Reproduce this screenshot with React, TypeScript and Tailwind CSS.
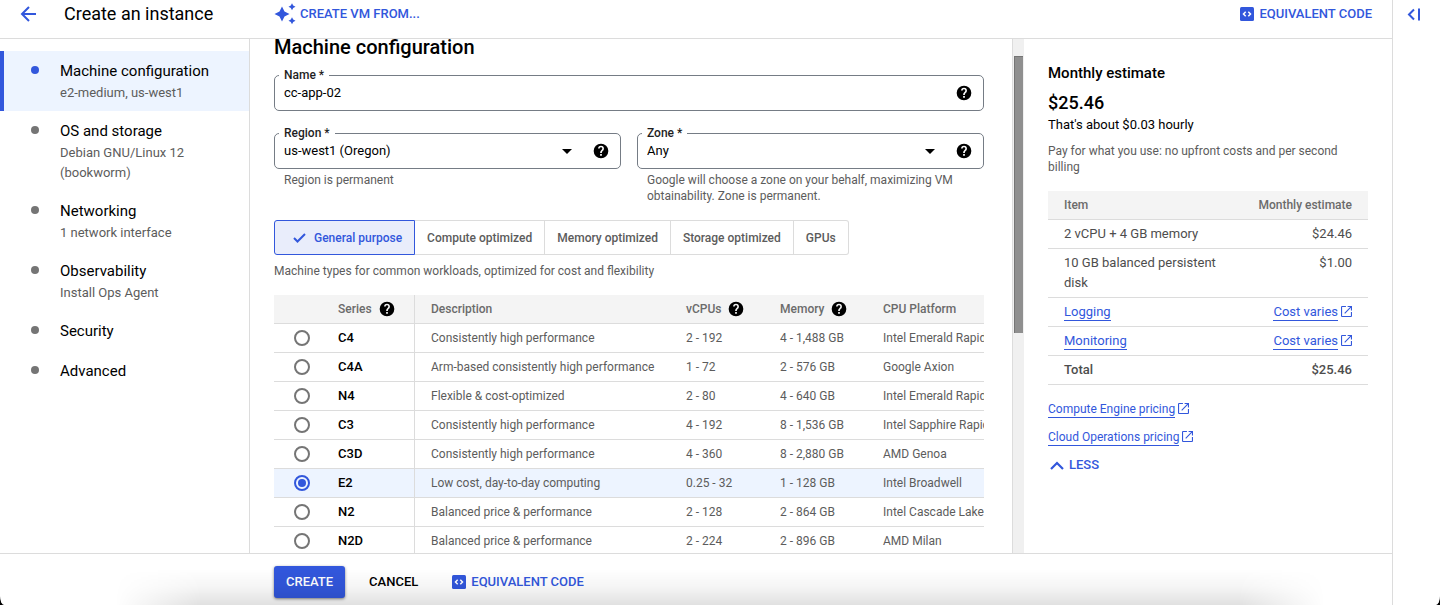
import { useState } from "react";

const BLUE = "#3257dc";

function HelpIcon() {
  return (
    <svg viewBox="0 0 24 24" className="size-4 shrink-0 text-black" fill="currentColor" aria-hidden="true">
      <path d="M12 1a11 11 0 1 0 0 22 11 11 0 0 0 0-22zm1.3 18h-2.6v-2.6h2.6zm2.5-8.2-1 1c-.9.9-1.5 1.700-1.5 3.300h-2.600v-.6c0-1.300.5-2.400 1.400-3.200l1.300-1.400c.4-.4.6-.9.6-1.500a2 2 0 1 0-4 0H7.600a4.400 4.400 0 0 1 8.800 0c0 .9-.2 1.700-.6 2.400z" />
    </svg>
  );
}

function HelpButton({ label }: { label: string }) {
  return (
    <button type="button" aria-label={label} className="flex">
      <HelpIcon />
    </button>
  );
}

function CodeIcon() {
  return (
    <svg viewBox="0 0 14 14" className="size-3.5 shrink-0" aria-hidden="true">
      <rect width="14" height="14" rx="1.500" fill={BLUE} />
      <path d="M5.700 4.800 3.500 7l2.200 2.200M8.300 4.800 10.500 7 8.300 9.200" fill="none" stroke="#fff" strokeWidth="1.500" />
    </svg>
  );
}

function SparkIcon() {
  return (
    <svg viewBox="0 0 22 22" className="size-[22px] shrink-0" fill={BLUE} aria-hidden="true">
      <path d="M8 3.500 10.500 8.500 15.500 11 10.500 13.500 8 18.500 5.500 13.500 .5 11 5.500 8.500z" />
      <path d="M18 .3 19.200 2.600 21.500 3.800 19.200 5 18 7.300 16.800 5 14.500 3.800 16.800 2.600z" />
      <path d="M18 14.300 19.200 16.600 21.500 17.800 19.200 19 18 21.300 16.800 19 14.500 17.800 16.800 16.600z" />
    </svg>
  );
}

function ExternalIcon() {
  return (
    <svg viewBox="2 2 20 20" className="mt-0.5 size-[11px] shrink-0" fill="currentColor" aria-hidden="true">
      <path d="M20 20H4V4h7V2H4a2 2 0 0 0-2 2v16a2 2 0 0 0 2 2h16a2 2 0 0 0 2-2v-7h-2zM14 2v2h4.600L8 14.600 9.400 16 20 5.400V10h2V2z" />
    </svg>
  );
}

function ExternalLink({ children }: { children: string }) {
  return (
    <a href="#" className="inline-flex items-start gap-[3px] text-[#3257dc]">
      <span className="border-b border-current leading-4">{children}</span>
      <ExternalIcon />
    </a>
  );
}

const steps = [
  { title: "Machine configuration", detail: "e2-medium, us-west1" },
  { title: "OS and storage", detail: "Debian GNU/Linux 12 (bookworm)" },
  { title: "Networking", detail: "1 network interface" },
  { title: "Observability", detail: "Install Ops Agent" },
  { title: "Security" },
  { title: "Advanced" },
];

function Sidebar() {
  return (
    <nav aria-label="Steps" className="w-[250px] shrink-0 border-r border-[#dcdcdc] pt-3">
      <ul>
        {steps.map((step, i) => (
          <li key={step.title}>
            <a
              href="#"
              aria-current={i === 0 ? "step" : undefined}
              className={`flex border-l-4 py-2 pr-10 pl-[27px] ${i === 0 ? "border-[#3257dc] bg-[#edf4ff]" : "border-transparent"}`}
            >
              <span className={`mt-[7px] mr-[21px] size-2 shrink-0 rounded-full ${i === 0 ? "bg-[#3257dc]" : "bg-[#757575]"}`} />
              <span className="flex flex-col">
                <span className="text-[15px] leading-6 whitespace-nowrap text-black">{step.title}</span>
                {step.detail && <span className="text-[13px] leading-5 text-[#5c5c5c]">{step.detail}</span>}
              </span>
            </a>
          </li>
        ))}
      </ul>
    </nav>
  );
}

const fieldBox = "relative flex h-9 min-w-0 items-center rounded-[5px] border border-[#757c85] pr-[11px] pl-[9px]";
const fieldLabel = "absolute -top-[9px] left-1 bg-white px-[5px] text-[12px] leading-4 font-medium text-[#1f1f1f]";

function SelectField({ id, label, value, hint }: { id: string; label: string; value: string; hint: string }) {
  return (
    <div className="min-w-0">
      <div className={fieldBox}>
        <label htmlFor={id} className={fieldLabel}>
          {label} *
        </label>
        <select id={id} className="min-w-0 flex-1 appearance-none bg-transparent text-[13px] leading-5 text-black outline-none">
          <option>{value}</option>
        </select>
        <svg viewBox="0 0 10 5" className="mr-[21px] h-[5px] w-2.5 shrink-0" aria-hidden="true">
          <path d="M0 0h10L5 5z" />
        </svg>
        <HelpButton label={`About ${label}`} />
      </div>
      <p className="mt-[3px] pr-4 pl-2.5 text-[12px] leading-4 text-[#5c5c5c]">{hint}</p>
    </div>
  );
}

const families = ["General purpose", "Compute optimized", "Memory optimized", "Storage optimized", "GPUs"];

const series = [
  ["C4", "Consistently high performance", "2 - 192", "4 - 1,488 GB", "Intel Emerald Rapids"],
  ["C4A", "Arm-based consistently high performance", "1 - 72", "2 - 576 GB", "Google Axion"],
  ["N4", "Flexible & cost-optimized", "2 - 80", "4 - 640 GB", "Intel Emerald Rapids"],
  ["C3", "Consistently high performance", "4 - 192", "8 - 1,536 GB", "Intel Sapphire Rapids"],
  ["C3D", "Consistently high performance", "4 - 360", "8 - 2,880 GB", "AMD Genoa"],
  ["E2", "Low cost, day-to-day computing", "0.25 - 32", "1 - 128 GB", "Intel Broadwell"],
  ["N2", "Balanced price & performance", "2 - 128", "2 - 864 GB", "Intel Cascade Lake"],
  ["N2D", "Balanced price & performance", "2 - 224", "2 - 896 GB", "AMD Milan"],
];

function SeriesTable() {
  const [selected, setSelected] = useState("E2");
  return (
    <div className="mt-4 overflow-hidden">
      <table className="w-[760px] table-fixed border-separate border-spacing-0 text-left text-[12px] leading-4 text-[#5c5c5c]">
        <colgroup>
          <col className="w-12" />
          <col className="w-[93px]" />
          <col className="w-[255px]" />
          <col className="w-[94px]" />
          <col className="w-[103px]" />
          <col />
        </colgroup>
        <thead>
          <tr className="h-[29px] bg-[#f4f4f4] text-[#6b6b6b] *:border-b *:border-[#dcdcdc] *:p-0 *:pl-4 *:font-medium">
            <th aria-label="Select" />
            <th className="border-r">
              <span className="flex items-center gap-[7px]">
                Series <HelpButton label="About series" />
              </span>
            </th>
            <th>Description</th>
            <th>
              <span className="flex items-center gap-[7px]">
                vCPUs <HelpButton label="About vCPUs" />
              </span>
            </th>
            <th>
              <span className="flex items-center gap-[7px]">
                Memory <HelpButton label="About memory" />
              </span>
            </th>
            <th>CPU Platform</th>
          </tr>
        </thead>
        <tbody>
          {series.map(([name, description, cpus, memory, platform]) => (
            <tr
              key={name}
              className={`h-[29px] *:border-b *:border-[#dcdcdc] *:p-0 *:pl-4 *:whitespace-nowrap ${selected === name ? "bg-[#edf4ff]" : ""}`}
            >
              <td>
                <input
                  type="radio"
                  name="series"
                  id={`series-${name}`}
                  checked={selected === name}
                  onChange={() => setSelected(name)}
                  className="ml-1 block size-4 appearance-none rounded-full border-2 border-[#757575] checked:border-[#3257dc] checked:bg-[#3257dc] checked:bg-clip-content checked:p-0.5"
                />
              </td>
              <td className="border-r text-[13px] font-medium text-black">
                <label htmlFor={`series-${name}`}>{name}</label>
              </td>
              <td>{description}</td>
              <td>{cpus}</td>
              <td>{memory}</td>
              <td>{platform}</td>
            </tr>
          ))}
        </tbody>
      </table>
    </div>
  );
}

function MachineForm() {
  return (
    <main className="min-w-0 flex-1 overflow-hidden pr-7 pl-6">
      <h2 className="text-[20px] leading-4 font-medium text-black">Machine configuration</h2>
      <div className={`mt-5 ${fieldBox}`}>
        <label htmlFor="name" className={fieldLabel}>
          Name *
        </label>
        <input id="name" defaultValue="cc-app-02" className="min-w-0 flex-1 bg-transparent text-[13px] leading-5 text-black outline-none" />
        <HelpButton label="About name" />
      </div>
      <div className="mt-[22px] grid grid-cols-2 gap-4">
        <SelectField id="region" label="Region" value="us-west1 (Oregon)" hint="Region is permanent" />
        <SelectField
          id="zone"
          label="Zone"
          value="Any"
          hint="Google will choose a zone on your behalf, maximizing VM obtainability. Zone is permanent."
        />
      </div>
      <div role="tablist" className="mt-4 flex h-[35px] text-[12px] font-medium text-[#5c5c5c]">
        {families.map((family, i) => (
          <button
            key={family}
            type="button"
            role="tab"
            aria-selected={i === 0}
            className={
              i === 0
                ? "flex items-center gap-2 rounded-l-[3px] border border-[#3257dc] bg-[#e9edfb] pr-3 pl-[18px] whitespace-nowrap text-[#3257dc]"
                : "border-y border-r border-[#dcdcdc] px-3 whitespace-nowrap last:rounded-r-[3px]"
            }
          >
            {i === 0 && (
              <svg viewBox="0 0 13 13" className="size-[13px]" fill="none" stroke="currentColor" strokeWidth="2" aria-hidden="true">
                <path d="m1 7 3.500 3.500L12 3" />
              </svg>
            )}
            {family}
          </button>
        ))}
      </div>
      <p className="mt-2 text-[12px] leading-4 text-[#5c5c5c]">Machine types for common workloads, optimized for cost and flexibility</p>
      <SeriesTable />
    </main>
  );
}

function Estimate() {
  return (
    <aside className="w-[368px] shrink-0 px-6 pt-[22px]">
      <h2 className="text-[15px] leading-6 font-medium text-black">Monthly estimate</h2>
      <p className="mt-1.5 text-[18px] leading-6 font-medium text-black">$25.46</p>
      <p className="text-[13px] leading-5 text-black">That's about $0.03 hourly</p>
      <p className="mt-2 text-[12px] leading-4 text-[#5c5c5c]">Pay for what you use: no upfront costs and per second billing</p>
      <table className="mt-4 w-full border-separate border-spacing-0 text-[13px] leading-5 text-[#4d4d4d] [&_td]:border-b [&_td]:border-[#dcdcdc] [&_td]:px-4 [&_td]:py-1 [&_td]:align-top [&_td:last-child]:text-right">
        <thead>
          <tr className="bg-[#f4f4f4] text-[12px] text-[#6b6b6b] *:border-b *:border-[#dcdcdc] *:px-4 *:py-1 *:font-medium">
            <th className="text-left">Item</th>
            <th className="text-right whitespace-nowrap">Monthly estimate</th>
          </tr>
        </thead>
        <tbody>
          <tr>
            <td>2 vCPU + 4 GB memory</td>
            <td>$24.46</td>
          </tr>
          <tr>
            <td>10 GB balanced persistent disk</td>
            <td>$1.00</td>
          </tr>
          {["Logging", "Monitoring"].map((item) => (
            <tr key={item}>
              <td>
                <a href="#" className="inline-block border-b border-current leading-4 text-[#3257dc]">
                  {item}
                </a>
              </td>
              <td className="whitespace-nowrap">
                <ExternalLink>Cost varies</ExternalLink>
              </td>
            </tr>
          ))}
          <tr className="font-medium">
            <td>Total</td>
            <td>$25.46</td>
          </tr>
        </tbody>
      </table>
      <ul className="mt-3.5 space-y-2 text-[12px]">
        <li className="flex h-5 items-center">
          <ExternalLink>Compute Engine pricing</ExternalLink>
        </li>
        <li className="flex h-5 items-center">
          <ExternalLink>Cloud Operations pricing</ExternalLink>
        </li>
      </ul>
      <button type="button" className="mt-2 flex items-center gap-[5px] pl-0.5 text-[13px] leading-5 font-medium text-[#3257dc]">
        <svg viewBox="0 0 14 9" className="h-[9px] w-3.5" fill="none" stroke="currentColor" strokeWidth="2.200" aria-hidden="true">
          <path d="m1 8 6-6 6 6" />
        </svg>
        LESS
      </button>
    </aside>
  );
}

export default function App() {
  return (
    <div className="bg-black font-['Roboto',sans-serif]">
      <div className="relative flex h-screen overflow-hidden bg-white [border-radius:0_0_4px_4px/0_0_9px_9px]">
        <div className="flex min-w-0 flex-1 flex-col">
          <header className="flex h-[39px] shrink-0 items-start border-b border-[#dcdcdc] pr-5 pl-5">
            <a href="#" aria-label="Back" className="mt-1.5 mr-7 flex text-[#3257dc]">
              <svg viewBox="0 0 16 16" className="size-4" fill="none" stroke="currentColor" strokeWidth="2" aria-hidden="true">
                <path d="M16 8H2M9 1 2 8l7 7" />
              </svg>
            </a>
            <h1 className="mt-0.5 w-[210px] text-[18px] leading-6 text-black">Create an instance</h1>
            <button type="button" className="mt-[3px] flex items-center gap-1 text-[13px] leading-5 font-medium text-[#3257dc]">
              <SparkIcon />
              CREATE VM FROM...
            </button>
            <button type="button" className="mt-1 ml-auto flex items-center gap-[5px] text-[13px] leading-5 font-medium text-[#3257dc]">
              <CodeIcon />
              EQUIVALENT CODE
            </button>
          </header>
          <div className="flex min-h-0 flex-1">
            <Sidebar />
            <MachineForm />
            <div aria-hidden="true" className="w-3 shrink-0 border-l border-[#dcdcdc] bg-[#f0f0f0] pt-[17px] pr-px pl-px">
              <div className="h-[277px] border-t border-l border-[#757575] bg-[#8f8f8f]" />
            </div>
            <Estimate />
          </div>
          <footer className="flex h-[52px] shrink-0 items-center gap-6 border-t border-[#dcdcdc] pt-1 pl-[274px] text-[13px] leading-5 font-medium">
            <button type="button" className="h-8 rounded-[3px] bg-[#3257dc] px-3 text-white shadow-[0_1px_3px_rgba(0,0,0,0.5)]">
              CREATE
            </button>
            <button type="button" className="text-black">
              CANCEL
            </button>
            <button type="button" className="ml-2.5 flex items-center gap-[5px] text-[#3257dc]">
              <CodeIcon />
              EQUIVALENT CODE
            </button>
          </footer>
        </div>
        <div className="w-12 shrink-0 border-l border-[#dcdcdc] pt-2 pl-3.5">
          <button type="button" aria-label="Expand panel" className="flex text-[#3257dc]">
            <svg viewBox="0 0 13 13" className="size-[13px]" fill="none" stroke="currentColor" strokeWidth="2" aria-hidden="true">
              <path d="M7 1.500 2 6.500l5 5M12 .5v12" />
            </svg>
          </button>
        </div>
        <div
          aria-hidden="true"
          className="pointer-events-none absolute inset-x-0 bottom-0 h-9 bg-linear-to-t from-black/12 via-black/4 to-transparent mask-[linear-gradient(to_right,transparent_8%,black_14%,black_86%,transparent_92%)]"
        />
      </div>
    </div>
  );
}
